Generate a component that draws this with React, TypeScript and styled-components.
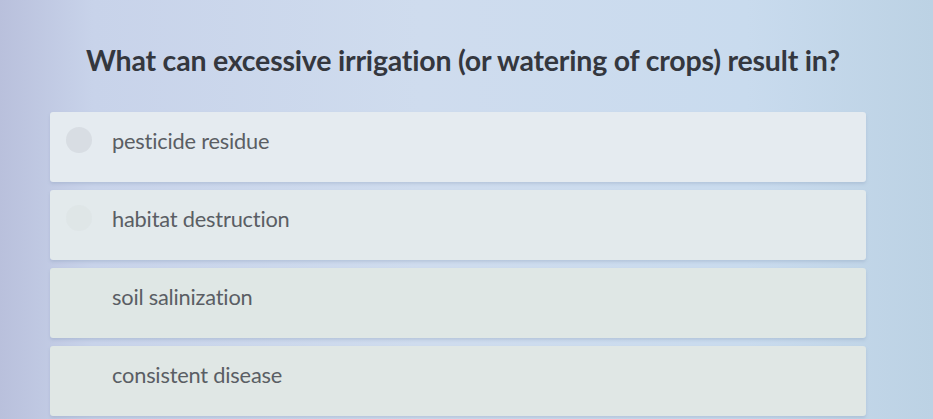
import { createGlobalStyle, styled } from 'styled-components';

const options = [
  { text: 'pesticide residue', radio: 0.45 },
  { text: 'habitat destruction', radio: 0.15 },
  { text: 'soil salinization', radio: 0 },
  { text: 'consistent disease', radio: 0 },
];

const GlobalStyle = createGlobalStyle`
  html, body {
    margin: 0;
    padding: 0;
  }
  body {
    width: 933px;
    height: 419px;
    overflow: hidden;
    font-family: Lato, "Open Sans", sans-serif;
    background: linear-gradient(90deg, #b9c0dc 0%, #c8d3ea 10%, #cfdcee 45%, #c9dbee 80%, #bcd2e4 100%);
  }
`;

const Page = styled.div`
  height: 419px;
  display: flex;
  flex-direction: column;
  padding: 38px 67px 0 50px;
  box-sizing: border-box;
`;

const Question = styled.h1`
  margin: 0 0 30px;
  padding-left: 36px;
  font-size: 28.5px;
  line-height: 44px;
  font-weight: 700;
  color: #34373e;
  letter-spacing: -0.2px;
`;

const OptionList = styled.div`
  display: flex;
  flex-direction: column;
  gap: 8px;
`;

const Option = styled.div<{ $shade: string }>`
  height: 70px;
  display: flex;
  align-items: center;
  gap: 20px;
  padding: 0 0 14px 16px;
  box-sizing: border-box;
  border-radius: 3px;
  background: ${(p) => p.$shade};
  box-shadow: 0 2px 3px rgba(120, 140, 170, 0.25);
`;

const Radio = styled.span<{ $alpha: number }>`
  width: 26px;
  height: 26px;
  border-radius: 50%;
  background: rgba(200, 205, 210, ${(p) => p.$alpha});
`;

const Label = styled.span`
  font-size: 21.8px;
  color: #5a5e64;
  letter-spacing: -0.2px;
`;

const shades = ['#e5ebf0', '#e3eaec', '#dfe7e5', '#e0e7e5'];

export default function App() {
  return (
    <>
      <GlobalStyle />
      <Page>
        <Question>What can excessive irrigation (or watering of crops) result in?</Question>
        <OptionList>
          {options.map((o, i) => (
            <Option key={o.text} $shade={shades[i]}>
              <Radio $alpha={o.radio} />
              <Label>{o.text}</Label>
            </Option>
          ))}
        </OptionList>
      </Page>
    </>
  );
}
